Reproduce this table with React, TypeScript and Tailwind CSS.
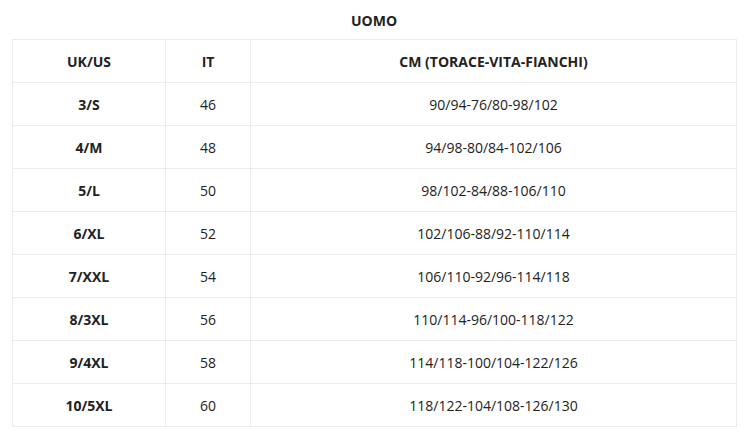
const rows = [
  { uk: "3/S", it: "46", cm: "90/94-76/80-98/102" },
  { uk: "4/M", it: "48", cm: "94/98-80/84-102/106" },
  { uk: "5/L", it: "50", cm: "98/102-84/88-106/110" },
  { uk: "6/XL", it: "52", cm: "102/106-88/92-110/114" },
  { uk: "7/XXL", it: "54", cm: "106/110-92/96-114/118" },
  { uk: "8/3XL", it: "56", cm: "110/114-96/100-118/122" },
  { uk: "9/4XL", it: "58", cm: "114/118-100/104-122/126" },
  { uk: "10/5XL", it: "60", cm: "118/122-104/108-126/130" },
];

const App = () => {
  return (
    <div className="min-h-screen bg-white text-[#222] font-['Open_Sans',sans-serif]">
      <div className="pl-[12px] pr-[10px]">
        {/* titolo */}
        <h2 className="h-[39px] pt-[11px] text-center text-[14px] font-bold leading-[20px]">UOMO</h2>

        <table className="w-[725px] border-collapse text-center text-[14px]">
          <thead>
            <tr className="h-[43px]">
              <th className="w-[153px] border border-[#ebebeb] font-bold">UK/US</th>
              <th className="w-[85px] border border-[#ebebeb] font-bold">IT</th>
              <th className="border border-[#ebebeb] font-bold">CM (TORACE-VITA-FIANCHI)</th>
            </tr>
          </thead>
          <tbody>
            {rows.map((row) => (
              <tr key={row.uk} className="h-[43px]">
                <td className="border border-[#ebebeb] font-bold">{row.uk}</td>
                <td className="border border-[#ebebeb]">{row.it}</td>
                <td className="border border-[#ebebeb]">{row.cm}</td>
              </tr>
            ))}
          </tbody>
        </table>
      </div>
    </div>
  );
};

export default App;
